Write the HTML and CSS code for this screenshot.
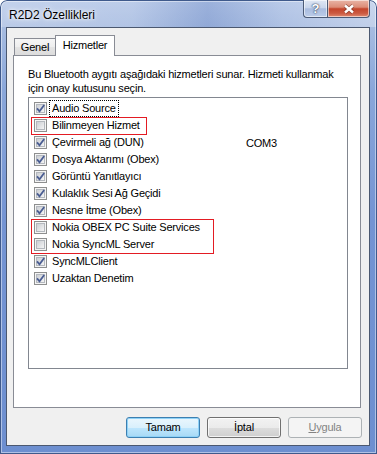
FILE: index.html
```html
<!DOCTYPE html>
<html lang="tr">
<head>
    <meta charset="UTF-8">
    <meta name="viewport" content="width=device-width, initial-scale=1.0">
    <title>R2D2 Özellikleri</title>
    <link rel="stylesheet" href="styles.css">
</head>
<body>
    <!-- shared checkbox drawings -->
    <svg class="defs" width="0" height="0" aria-hidden="true">
        <defs>
            <linearGradient id="boxFill" x1="0" y1="0" x2="1" y2="1">
                <stop offset="0" stop-color="#c9ccd1"/>
                <stop offset="1" stop-color="#f7f7f7"/>
            </linearGradient>
            <symbol id="box" viewBox="0 0 13 13">
                <rect x="0.5" y="0.5" width="12" height="12" fill="#f4f4f4" stroke="#8e8f8f"/>
                <rect x="2.5" y="2.5" width="8" height="8" fill="url(#boxFill)" stroke="#b4b8be"/>
            </symbol>
            <symbol id="tick" viewBox="0 0 13 13">
                <path d="M3 6.4 L5.5 9.3 L10.2 3" fill="none" stroke="#4a5d92" stroke-width="1.8"/>
            </symbol>
        </defs>
    </svg>

    <div class="window">
        <div class="titlebar">
            <span class="title">R2D2 Özellikleri</span>
            <div class="caption">
                <span class="cap-btn help">?</span>
                <span class="cap-btn close">
                    <svg width="12" height="10" viewBox="0 0 12 10">
                        <path d="M2 1.5 L10 8.5 M10 1.5 L2 8.5" stroke="#5a2418" stroke-width="4" stroke-opacity="0.55"/>
                        <path d="M2 1.5 L10 8.5 M10 1.5 L2 8.5" stroke="#fff" stroke-width="2.4"/>
                    </svg>
                </span>
            </div>
        </div>

        <div class="client">
            <div class="tabs">
                <span class="tab">Genel</span>
                <span class="tab active">Hizmetler</span>
            </div>

            <div class="panel">
                <p class="intro">Bu Bluetooth aygıtı aşağıdaki hizmetleri sunar. Hizmeti kullanmak<br>için onay kutusunu seçin.</p>

                <div class="listbox">
                    <div class="item">
                        <span class="name"><svg class="chk"><use href="#box"/><use href="#tick"/></svg><span class="label focus">Audio Source</span></span>
                    </div>
                    <div class="item">
                        <span class="name"><svg class="chk"><use href="#box"/></svg><span class="label">Bilinmeyen Hizmet</span></span>
                    </div>
                    <div class="item">
                        <span class="name"><svg class="chk"><use href="#box"/><use href="#tick"/></svg><span class="label">Çevirmeli ağ (DUN)</span></span>
                        <span class="port">COM3</span>
                    </div>
                    <div class="item">
                        <span class="name"><svg class="chk"><use href="#box"/><use href="#tick"/></svg><span class="label">Dosya Aktarımı (Obex)</span></span>
                    </div>
                    <div class="item">
                        <span class="name"><svg class="chk"><use href="#box"/><use href="#tick"/></svg><span class="label">Görüntü Yanıtlayıcı</span></span>
                    </div>
                    <div class="item">
                        <span class="name"><svg class="chk"><use href="#box"/><use href="#tick"/></svg><span class="label">Kulaklık Sesi Ağ Geçidi</span></span>
                    </div>
                    <div class="item">
                        <span class="name"><svg class="chk"><use href="#box"/><use href="#tick"/></svg><span class="label">Nesne İtme (Obex)</span></span>
                    </div>
                    <div class="item">
                        <span class="name"><svg class="chk"><use href="#box"/></svg><span class="label">Nokia OBEX PC Suite Services</span></span>
                    </div>
                    <div class="item">
                        <span class="name"><svg class="chk"><use href="#box"/></svg><span class="label">Nokia SyncML Server</span></span>
                    </div>
                    <div class="item">
                        <span class="name"><svg class="chk"><use href="#box"/><use href="#tick"/></svg><span class="label">SyncMLClient</span></span>
                    </div>
                    <div class="item">
                        <span class="name"><svg class="chk"><use href="#box"/><use href="#tick"/></svg><span class="label">Uzaktan Denetim</span></span>
                    </div>

                    <!-- red annotation boxes drawn over the list -->
                    <div class="mark mark-one"></div>
                    <div class="mark mark-two"></div>
                </div>
            </div>

            <div class="buttons">
                <button class="btn default">Tamam</button>
                <button class="btn">İptal</button>
                <button class="btn disabled"><u>U</u>ygula</button>
            </div>
        </div>
    </div>
</body>
</html>
```

FILE: styles.css
```css
html, body {
    margin: 0;
    padding: 0;
}

body {
    background: #fff;
    font-family: "Liberation Sans", Arial, sans-serif;
    font-size: 11px;
    color: #000;
}

.defs {
    position: absolute;
    width: 0;
    height: 0;
    overflow: hidden;
}

/* Window frame (Aero glass look) */
.window {
    width: 377px;
    height: 454px;
    box-sizing: border-box;
    padding: 0 7px 8px 6px;
    display: flex;
    flex-direction: column;
    border-radius: 7px 7px 0 0;
    background:
        linear-gradient(90deg, rgba(255,255,255,0.22) 0%, rgba(255,255,255,0.12) 35%, rgba(30,70,160,0.16) 55%, rgba(255,255,255,0.08) 75%, rgba(255,255,255,0.3) 100%) top / 100% 27px no-repeat,
        linear-gradient(180deg, #b4c6e7 0%, #a7bce1 27px, #8aa7da 90px, #7494d3 220px, #6d8fd0 100%);
    box-shadow: inset 0 0 0 1px #3f5a8c, inset 0 0 0 2px rgba(255,255,255,0.45), inset 0 -1px 0 #5fd2f6;
}

.titlebar {
    height: 27px;
    display: flex;
    align-items: flex-start;
}

.title {
    margin: 7px 0 0 3px;
    font-size: 12px;
    line-height: 16px;
    color: #000;
    text-shadow: 0 0 6px #fff, 0 0 3px rgba(255,255,255,0.9);
}

.caption {
    margin-left: auto;
    display: flex;
}

.cap-btn {
    height: 18px;
    box-sizing: border-box;
    border: 1px solid #4c5b76;
    border-top: 0;
    display: flex;
    align-items: center;
    justify-content: center;
    box-shadow: inset 0 0 0 1px rgba(255,255,255,0.55);
}

.help {
    width: 24px;
    border-right: 0;
    border-radius: 0 0 0 4px;
    background: linear-gradient(180deg, #dfe7f4 0%, #c9d6ec 45%, #a9bcdf 52%, #bccde9 100%);
    color: #fff;
    font-weight: bold;
    font-size: 13px;
    text-shadow: 0 0 1px #2c3a55, 0 0 2px #2c3a55;
}

.close {
    width: 43px;
    border-radius: 0 0 4px 0;
    background: linear-gradient(180deg, #e9b4a6 0%, #dc8d78 42%, #c4452c 52%, #cc5a41 78%, #e08a72 100%);
}

/* Client area */
.client {
    flex: 1;
    display: flex;
    flex-direction: column;
    padding: 7px 8px 7px 6px;
    background: #f0f0f0;
    border: 1px solid #4b5870;
    letter-spacing: -0.2px;
}

.tabs {
    height: 20px;
    display: flex;
    align-items: flex-end;
    padding-left: 1px;
}

.tab {
    width: 42px;
    height: 17px;
    box-sizing: border-box;
    border: 1px solid #898c95;
    border-bottom: 0;
    text-align: center;
    line-height: 16px;
    background: linear-gradient(180deg, #f6f6f6 0%, #eeeeee 50%, #e4e4e4 51%, #dcdcdc 100%);
}

.tab.active {
    width: 60px;
    height: 21px;
    margin-left: -1px;
    margin-bottom: -1px;
    line-height: 18px;
    background: #fff;
    position: relative;
}

.panel {
    height: 353px;
    box-sizing: border-box;
    border: 1px solid #898c95;
    background: #fff;
    padding: 11px 0 0 14px;
}

.intro {
    margin: 0;
    line-height: 14px;
    white-space: nowrap;
}

.listbox {
    position: relative;
    width: 320px;
    height: 272px;
    box-sizing: border-box;
    margin-top: 2px;
    padding-top: 2px;
    border: 1px solid #828790;
    background: #fff;
}

.item {
    height: 17px;
    display: grid;
    grid-template-columns: 212px auto;
    align-items: center;
    padding-left: 5px;
}

.name {
    display: flex;
    align-items: center;
}

.chk {
    width: 13px;
    height: 13px;
    flex: none;
}

.label {
    margin-left: 2px;
    padding: 0 2px;
    line-height: 15px;
    border: 1px dotted transparent;
    white-space: nowrap;
}

.label.focus {
    border-color: #000;
}

/* annotation frames */
.mark {
    position: absolute;
    left: 2px;
    box-sizing: border-box;
    border: 1px solid #e31b23;
}

.mark-one {
    top: 19px;
    width: 116px;
    height: 18px;
}

.mark-two {
    top: 121px;
    width: 183px;
    height: 35px;
}

/* Dialog buttons */
.buttons {
    display: flex;
    justify-content: flex-end;
    gap: 7px;
    margin: 9px -1px 0 0;
}

.btn {
    width: 74px;
    height: 21px;
    box-sizing: border-box;
    padding: 0;
    border: 1px solid #707070;
    border-radius: 3px;
    font: inherit;
    letter-spacing: inherit;
    color: #000;
    line-height: 19px;
    background: linear-gradient(180deg, #f2f2f2 0%, #ebebeb 50%, #dddddd 51%, #cfcfcf 100%);
    box-shadow: inset 0 0 0 1px rgba(255,255,255,0.75);
}

.btn.default {
    border-color: #3c7fb1;
    background: linear-gradient(180deg, #eaf6fd 0%, #d9f0fc 50%, #bee6fd 51%, #a7d9f5 100%);
    box-shadow: inset 0 0 0 1px #8fd2f7;
}

.btn.disabled {
    border-color: #adb2b5;
    background: #f4f4f4;
    color: #838383;
    box-shadow: none;
}
```
